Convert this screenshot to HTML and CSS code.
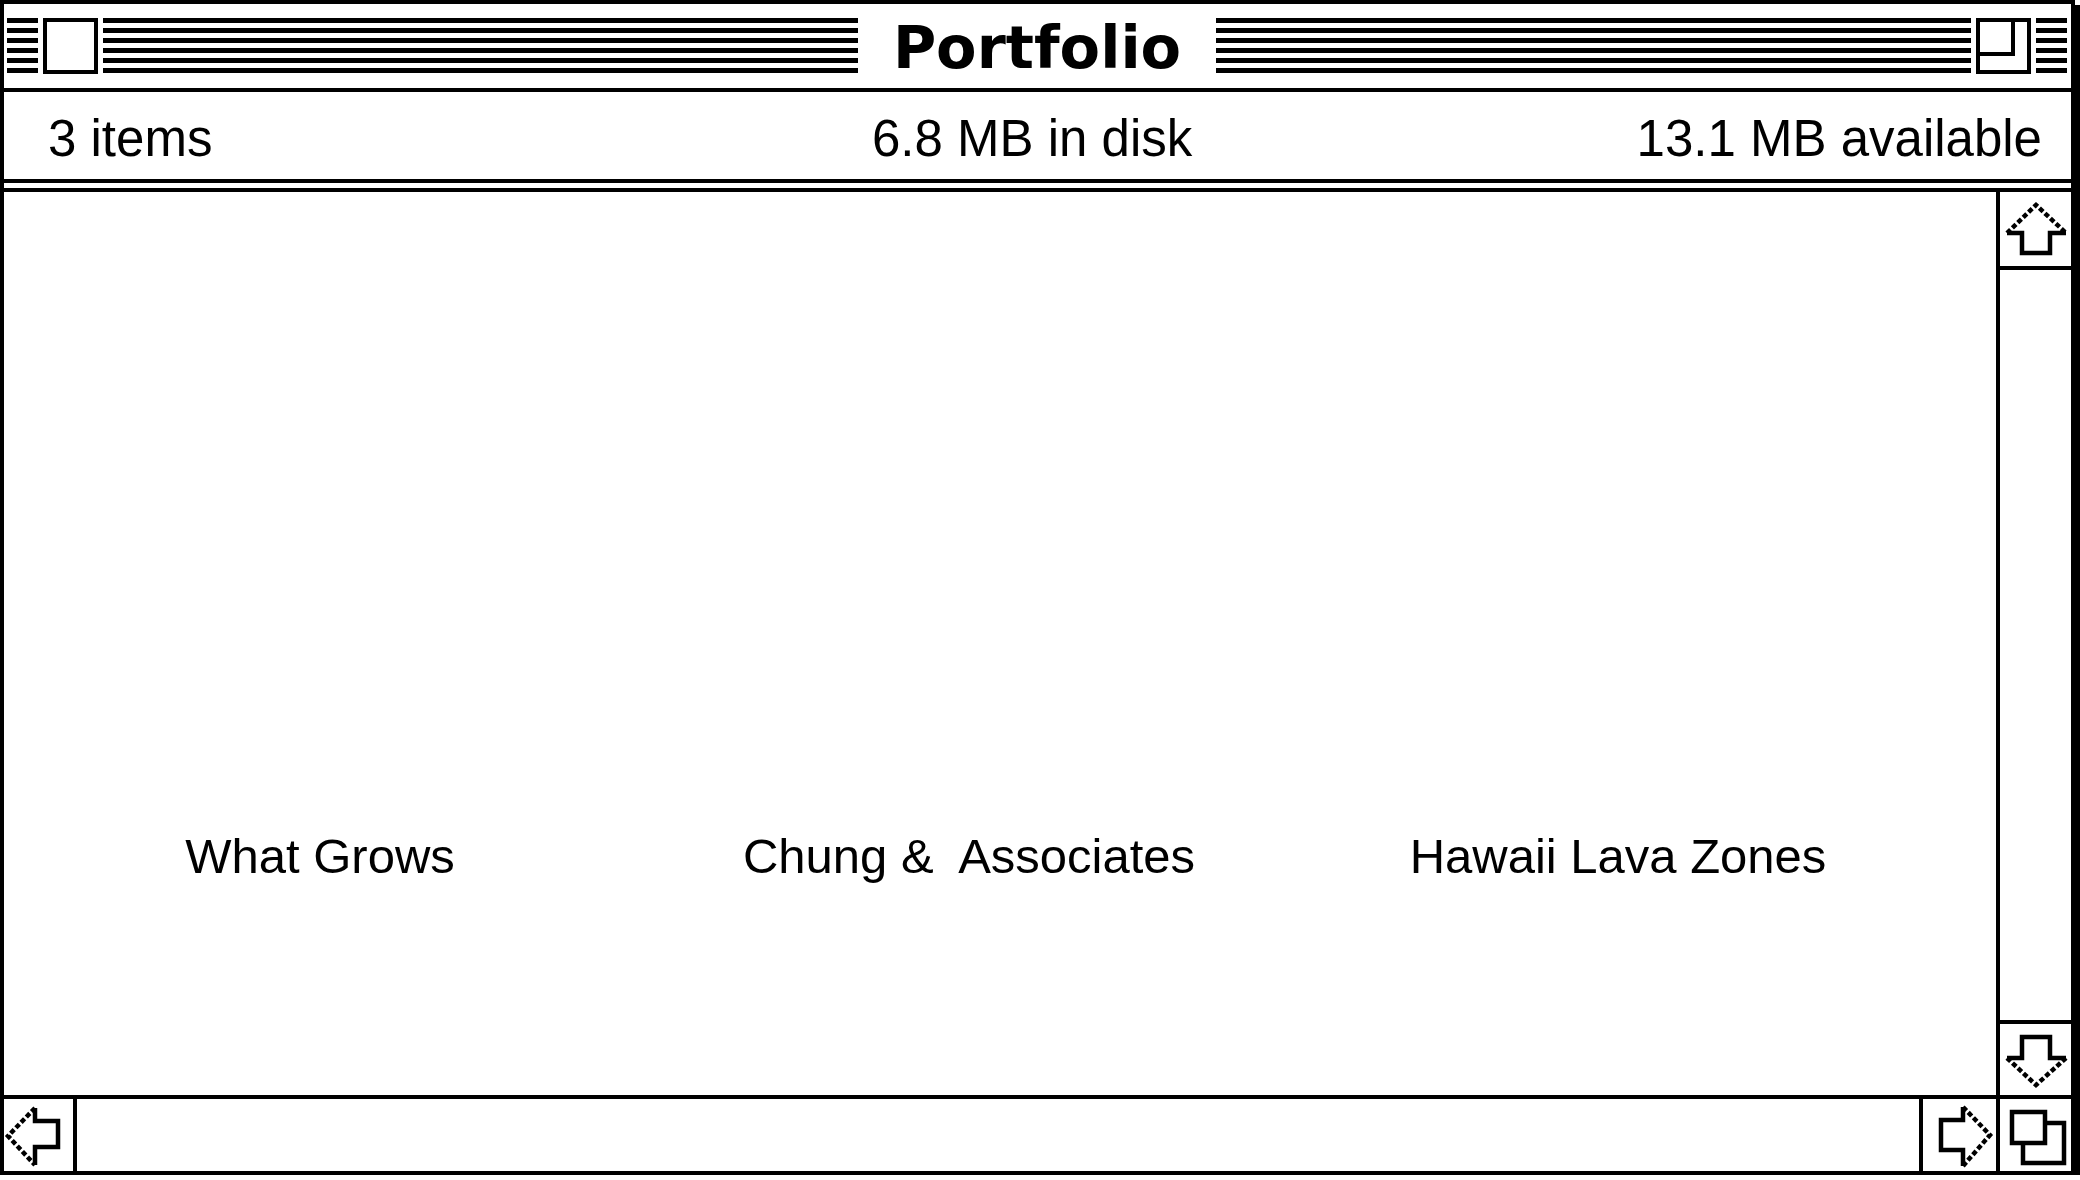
FILE: index.html
```html
<!DOCTYPE html>
<html lang="en">
<head>
    <meta charset="UTF-8">
    <title>Portfolio</title>
    <link rel="stylesheet" href="styles.css">
</head>
<body>

    <div class="window">
        <div class="titlebar">
            <div class="stripes stripes-end"></div>
            <div class="close-box"></div>
            <div class="stripes stripes-fill"></div>
            <div class="title">Portfolio</div>
            <div class="stripes stripes-fill"></div>
            <div class="zoom-box"><div class="zoom-inner"></div></div>
            <div class="stripes stripes-end"></div>
        </div>

        <div class="info">
            <span>3 items</span>
            <span>6.8 MB in disk</span>
            <span class="info-right">13.1 MB available</span>
        </div>

        <div class="main">
            <div class="content">
                <div class="icons">
                    <div class="icon-label">What Grows</div>
                    <div class="icon-label">Chung &amp;&nbsp; Associates</div>
                    <div class="icon-label">Hawaii Lava Zones</div>
                </div>
            </div>
            <div class="vscroll">
                <div class="arrow-up">
                    <svg width="71" height="74" viewBox="0 0 71 74">
                        <path class="solid" d="M7 41 H22 V61 H50 V41 H66"/>
                        <path class="dots" d="M7 41 L36 13 L66 41"/>
                    </svg>
                </div>
                <div class="vtrack"></div>
                <div class="arrow-down">
                    <svg width="71" height="71" viewBox="0 0 71 71">
                        <path class="solid" d="M7 34 H22 V13 H50 V34 H66"/>
                        <path class="dots" d="M7 34 L36 61 L66 34"/>
                    </svg>
                </div>
            </div>
        </div>

        <div class="hscroll">
            <div class="arrow-left">
                <svg width="69" height="72" viewBox="0 0 69 72">
                    <path class="solid" d="M31 9 V22 H54 V48 H31 V66"/>
                    <path class="dots" d="M31 9 L4 37 L31 66"/>
                </svg>
            </div>
            <div class="htrack"></div>
            <div class="arrow-right">
                <svg width="73" height="72" viewBox="0 0 73 72">
                    <path class="solid" d="M40 8 V21 H18 V51 H40 V67"/>
                    <path class="dots" d="M40 8 L67 36 L40 67"/>
                </svg>
            </div>
            <div class="grow-box">
                <svg width="71" height="72" viewBox="0 0 71 72">
                    <rect class="solid" x="23" y="24" width="41" height="40"/>
                    <rect class="solid filled" x="12" y="13" width="33" height="31"/>
                </svg>
            </div>
        </div>
    </div>

</body>
</html>
```

FILE: styles.css
```css
body {
    margin: 0;
    background-color: #fff;
    color: #000;
    font-family: 'Liberation Sans', Arial, sans-serif;
}
.window {
    width: 2075px;
    height: 1175px;
    box-sizing: border-box;
    border: 4px solid #000;
    box-shadow: 5px 5px 0 #000;
    background-color: #fff;
    display: flex;
    flex-direction: column;
}
.titlebar {
    height: 84px;
    border-bottom: 4px solid #000;
    display: flex;
    align-items: center;
    gap: 5px;
    padding: 0 4px 0 3px;
}
.stripes {
    height: 56px;
    background: repeating-linear-gradient(to bottom, #000 0 5px, #fff 5px 10px);
}
.stripes-end {
    width: 31px;
}
.stripes-fill {
    flex: 1;
}
.close-box,
.zoom-box {
    width: 55px;
    height: 56px;
    box-sizing: border-box;
    border: 4px solid #000;
}
.zoom-inner {
    width: 31px;
    height: 30px;
    border-right: 4px solid #000;
    border-bottom: 4px solid #000;
}
.title {
    height: 56px;
    padding: 0 30px;
    font-family: 'DejaVu Sans', sans-serif;
    font-weight: 700;
    font-size: 59px;
    line-height: 59px;
    white-space: nowrap;
}
.info {
    height: 81px;
    padding: 6px 29px 0 44px;
    border-bottom: 4px solid #000;
    display: grid;
    grid-template-columns: 824px auto 1fr;
    font-size: 51px;
    line-height: 81px;
    white-space: nowrap;
}
.info-right {
    text-align: right;
}
.main {
    flex: 1;
    min-height: 0;
    margin-top: 5px;
    border-top: 4px solid #000;
    display: flex;
}
.content {
    flex: 1;
    padding-top: 636px;
}
.icons {
    display: grid;
    grid-template-columns: repeat(3, 600px);
    column-gap: 49px;
    padding-left: 16px;
    font-size: 49px;
    line-height: 56px;
    text-align: center;
    white-space: nowrap;
}
.vscroll {
    width: 71px;
    border-left: 4px solid #000;
    display: flex;
    flex-direction: column;
}
.arrow-up {
    height: 74px;
    border-bottom: 4px solid #000;
}
.vtrack {
    flex: 1;
}
.arrow-down {
    height: 71px;
    border-top: 4px solid #000;
}
.hscroll {
    height: 72px;
    border-top: 4px solid #000;
    display: flex;
}
.arrow-left {
    width: 69px;
    border-right: 4px solid #000;
}
.htrack {
    flex: 1;
}
.arrow-right {
    width: 73px;
    border-left: 4px solid #000;
}
.grow-box {
    width: 71px;
    border-left: 4px solid #000;
}
svg {
    display: block;
}
.solid {
    fill: none;
    stroke: #000;
    stroke-width: 4.5;
}
.solid.filled {
    fill: #fff;
}
.dots {
    fill: none;
    stroke: #000;
    stroke-width: 4.5;
    stroke-dasharray: 5 2.5;
}
```
